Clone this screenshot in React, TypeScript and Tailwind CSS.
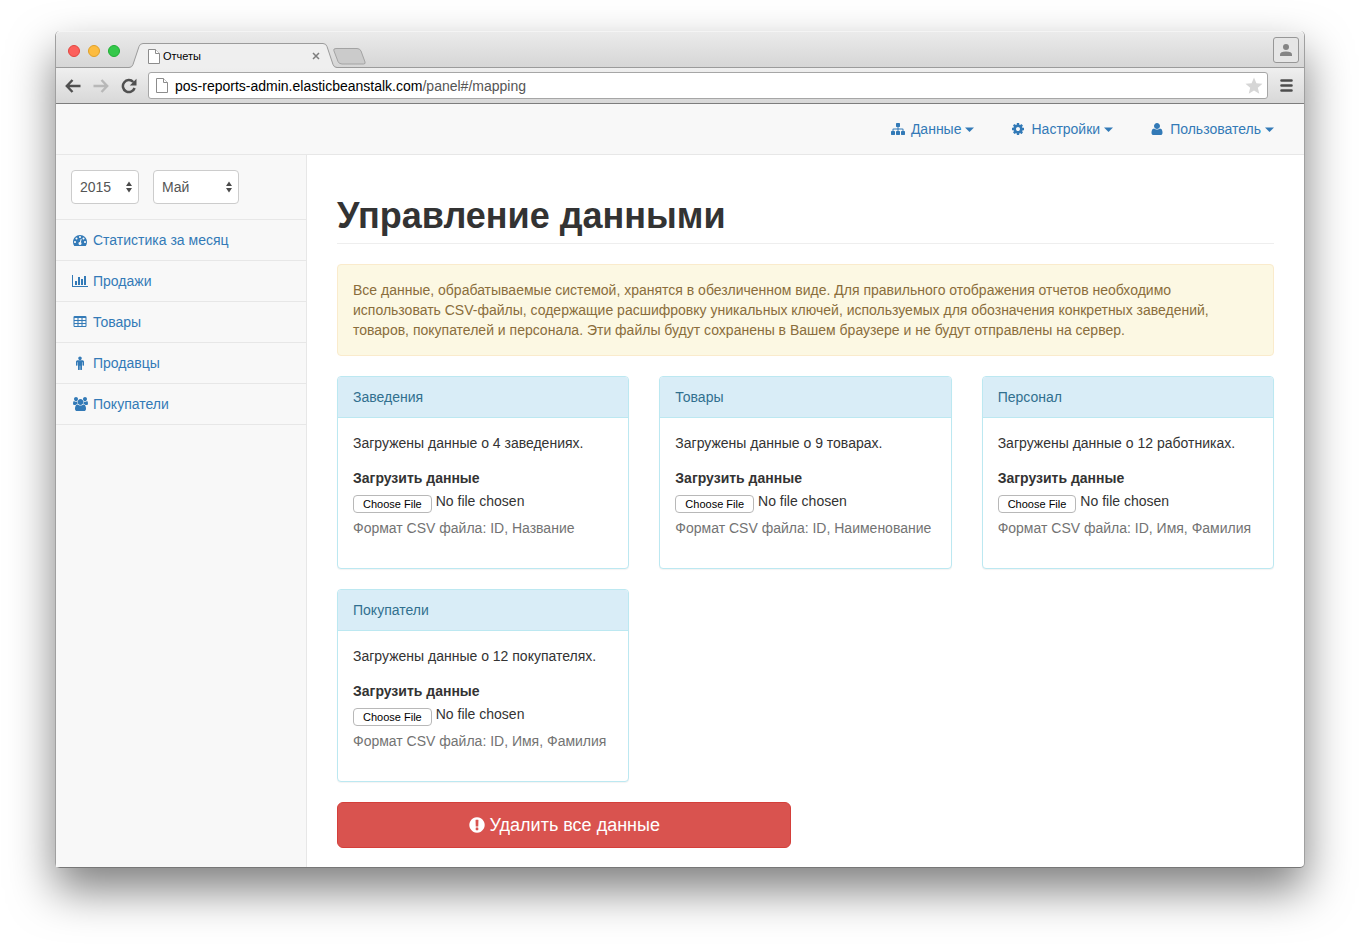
import React from "react";

type IconShape = { width: number; path: string };

const icons: Record<string, IconShape> = {
  sitemap: {
    width: 1792,
    path: "M1792 1248v320q0 40-28 68t-68 28h-320q-40 0-68-28t-28-68v-320q0-40 28-68t68-28h96v-192h-512v192h96q40 0 68 28t28 68v320q0 40-28 68t-68 28h-320q-40 0-68-28t-28-68v-320q0-40 28-68t68-28h96v-192h-512v192h96q40 0 68 28t28 68v320q0 40-28 68t-68 28h-320q-40 0-68-28t-28-68v-320q0-40 28-68t68-28h96v-192q0-52 38-90t90-38h512v-192h-96q-40 0-68-28t-28-68v-320q0-40 28-68t68-28h320q40 0 68 28t28 68v320q0 40-28 68t-68 28h-96v192h512q52 0 90 38t38 90v192h96q40 0 68 28t28 68z",
  },
  cog: {
    width: 1792,
    path: "M1152 896q0-106-75-181t-181-75-181 75-75 181 75 181 181 75 181-75 75-181zm512-109v222q0 12-8 23t-20 13l-185 28q-19 54-39 91 35 50 107 138 10 12 10 25t-9 23q-27 37-99 108t-94 71q-12 0-26-9l-138-108q-44 23-91 38-16 136-29 186-7 28-36 28h-222q-14 0-24.5-8.5t-11.5-21.5l-28-184q-49-16-90-37l-141 107q-10 9-25 9-14 0-25-11-126-114-165-168-7-10-7-23 0-12 8-23 15-21 51-66.5t54-70.5q-27-50-41-99l-183-27q-13-2-21-12.5t-8-23.5v-222q0-12 8-23t19-13l186-28q14-46 39-92-40-57-107-138-10-12-10-24 0-10 9-23 26-36 98.5-107.5t94.5-71.5q13 0 26 10l138 107q44-23 91-38 16-136 29-186 7-28 36-28h222q14 0 24.5 8.5t11.5 21.5l28 184q49 16 90 37l142-107q9-9 24-9 13 0 25 10 129 119 165 170 7 8 7 22 0 12-8 23-15 21-51 66.5t-54 70.5q26 50 41 98l183 28q13 2 21 12.5t8 23.5z",
  },
  user: {
    width: 1792,
    path: "M1600 1405q0 120-73 189.5t-194 69.5h-874q-121 0-194-69.5t-73-189.5q0-53 3.5-103.5t14-109 26.5-108.5 43-97.5 62-81 85.5-53.5 111.5-20q9 0 42 21.5t74.5 48 108 48 133.5 21.5 133.5-21.5 108-48 74.5-48 42-21.5q61 0 111.5 20t85.5 53.5 62 81 43 97.5 26.5 108.5 14 109 3.5 103.5zm-320-893q0 159-112.5 271.5t-271.5 112.5-271.5-112.5-112.5-271.5 112.5-271.5 271.5-112.5 271.5 112.5 112.5 271.5z",
  },
  dashboard: {
    width: 1792,
    path: "M384 1152q0-53-37.5-90.5t-90.5-37.5-90.5 37.5-37.5 90.5 37.5 90.5 90.5 37.5 90.5-37.5 37.5-90.5zm192-448q0-53-37.5-90.5t-90.5-37.5-90.5 37.5-37.5 90.5 37.5 90.5 90.5 37.5 90.5-37.5 37.5-90.5zm428 481l101-382q6-26-7.5-48.5t-38.5-29.5-48 6.5-30 39.5l-101 382q-60 5-107 43.5t-63 98.5q-20 77 20 146t117 89 146-20 89-117q16-60-6-117t-72-91zm660-33q0-53-37.5-90.5t-90.5-37.5-90.5 37.5-37.5 90.5 37.5 90.5 90.5 37.5 90.5-37.5 37.5-90.5zm-640-640q0-53-37.5-90.5t-90.5-37.5-90.5 37.5-37.5 90.5 37.5 90.5 90.5 37.5 90.5-37.5 37.5-90.5zm448 192q0-53-37.5-90.5t-90.5-37.5-90.5 37.5-37.5 90.5 37.5 90.5 90.5 37.5 90.5-37.5 37.5-90.5zm320 448q0 261-141 483-19 29-54 29h-1402q-35 0-54-29-141-221-141-483 0-182 71-348t191-286 286-191 348-71 348 71 286 191 191 286 71 348z",
  },
  chart: {
    width: 2048,
    path: "M640 896v512h-256v-512h256zm384-512v1024h-256v-1024h256zm1024 1152v128h-2048v-1536h128v1408h1920zm-640-896v768h-256v-768h256zm384-384v1152h-256v-1152h256z",
  },
  table: {
    width: 1792,
    path: "M224 128h1344q66 0 113 47t47 113v1088q0 66-47 113t-113 47h-1344q-66 0-113-47t-47-113v-1088q0-66 47-113t113-47zM192 416v192q0 32 32 32h320q32 0 32-32v-192q0-32-32-32h-320q-32 0-32 32zM704 416v192q0 32 32 32h320q32 0 32-32v-192q0-32-32-32h-320q-32 0-32 32zM1216 416v192q0 32 32 32h320q32 0 32-32v-192q0-32-32-32h-320q-32 0-32 32zM192 800v192q0 32 32 32h320q32 0 32-32v-192q0-32-32-32h-320q-32 0-32 32zM704 800v192q0 32 32 32h320q32 0 32-32v-192q0-32-32-32h-320q-32 0-32 32zM1216 800v192q0 32 32 32h320q32 0 32-32v-192q0-32-32-32h-320q-32 0-32 32zM192 1184v192q0 32 32 32h320q32 0 32-32v-192q0-32-32-32h-320q-32 0-32 32zM704 1184v192q0 32 32 32h320q32 0 32-32v-192q0-32-32-32h-320q-32 0-32 32zM1216 1184v192q0 32 32 32h320q32 0 32-32v-192q0-32-32-32h-320q-32 0-32 32z",
  },
  male: {
    width: 1792,
    path: "M1408 736v416q0 40-28 68t-68 28-68-28-28-68v-352h-64v912q0 46-33 79t-79 33-79-33-33-79v-464h-64v464q0 46-33 79t-79 33-79-33-33-79v-912h-64v352q0 40-28 68t-68 28-68-28-28-68v-416q0-80 56-136t136-56h640q80 0 136 56t56 136zm-288-448q0 93-65.5 158.5t-158.5 65.5-158.5-65.5-65.5-158.5 65.5-158.5 158.5-65.5 158.5 65.5 65.5 158.5z",
  },
  group: {
    width: 1920,
    path: "M593 896q-162 5-265 128h-134q-82 0-138-40.5t-56-118.5q0-353 124-353 6 0 43.5 21t97.5 42.5 119 21.5q67 0 133-23-5 37-5 66 0 139 81 256zm1071 637q0 120-73 189.5t-194 69.5h-874q-121 0-194-69.5t-73-189.5q0-53 3.5-103.5t14-109 26.5-108.5 43-97.5 62-81 85.5-53.5 111.5-20q10 0 43 21.5t73 48 107 48 135 21.5 135-21.5 107-48 73-48 43-21.5q61 0 111.5 20t85.5 53.5 62 81 43 97.5 26.5 108.5 14 109 3.5 103.5zm-1024-1277q0 106-75 181t-181 75-181-75-75-181 75-181 181-75 181 75 75 181zm704 384q0 159-112.5 271.5t-271.5 112.5-271.5-112.5-112.5-271.5 112.5-271.5 271.5-112.5 271.5 112.5 112.5 271.5zm576 225q0 78-56 118.5t-138 40.5h-134q-103-123-265-128 81-117 81-256 0-29-5-66 66 23 133 23 59 0 119-21.5t97.5-42.5 43.5-21q124 0 124 353zm-128-609q0 106-75 181t-181 75-181-75-75-181 75-181 181-75 181 75 75 181z",
  },
  warning: {
    width: 1792,
    path: "M896 128q209 0 385.5 103t279.5 279.5 103 385.5-103 385.5-279.5 279.5-385.5 103-385.5-103-279.5-279.5-103-385.5 103-385.5 279.5-279.5 385.5-103zm128 1247v-190q0-14-9-23.5t-22-9.5h-192q-13 0-23 10t-10 23v190q0 13 10 23t23 10h192q13 0 22-9.5t9-23.5zm-2-344l18-621q0-12-10-18-10-8-24-8h-220q-14 0-24 8-10 6-10 18l17 621q0 10 10 17.5t24 7.5h185q14 0 23.5-7.5t10.5-17.5z",
  },
};

function Icon({ name, className }: { name: string; className: string }) {
  const { width, path } = icons[name];
  return (
    <svg viewBox={`0 0 ${width} 1792`} className={className} fill="currentColor" fillRule="evenodd" aria-hidden="true">
      <path d={path} />
    </svg>
  );
}

function PageIcon() {
  return (
    <svg viewBox="0 0 12 15" className="h-[15px] w-3 shrink-0" fill="#fff" stroke="#8c8c8c" aria-hidden="true">
      <path d="M.5.5h7l4 4v10H.5z" />
      <path d="M7.500.5v4h4" />
    </svg>
  );
}

function BrowserTab() {
  return (
    <div className="-mb-px flex h-[25px] text-[#9b9b9b]">
      <svg viewBox="0 0 14 25" className="h-[25px] w-[14px]" aria-hidden="true">
        <path d="M0 25v-.5Q3 24.500 4 21.500L10 3.500Q11 .5 14 .5V25z" fill="#efefef" />
        <path d="M0 24.500Q3 24.500 4 21.500L10 3.500Q11 .5 14 .5" fill="none" stroke="currentColor" />
      </svg>
      <div className="flex w-[180px] items-center border-t border-[#9b9b9b] bg-[#efefef] pl-[5px] text-[11px] text-black">
        <PageIcon />
        <span className="ml-[3px]">Отчеты</span>
        <button type="button" aria-label="Закрыть вкладку" className="mr-[3px] ml-auto text-[#7d7d7d]">
          <svg viewBox="0 0 8 8" className="size-2" stroke="currentColor" strokeWidth="1.500" aria-hidden="true">
            <path d="M1 1l6 6M7 1L1 7" />
          </svg>
        </button>
      </div>
      <svg viewBox="0 0 14 25" className="h-[25px] w-[14px]" aria-hidden="true">
        <path d="M14 25v-.5Q11 24.500 10 21.500L4 3.500Q3 .5 0 .5V25z" fill="#efefef" />
        <path d="M14 24.500Q11 24.500 10 21.500L4 3.500Q3 .5 0 .5" fill="none" stroke="currentColor" />
      </svg>
    </div>
  );
}

function BrowserChrome() {
  return (
    <div>
      <div className="flex h-[37px] items-end rounded-t-[5px] border-t border-b border-t-[#f4f4f4] border-b-[#9b9b9b] bg-linear-to-b from-[#ebebeb] to-[#d6d6d6] pl-3">
        <div className="flex gap-2 self-center pt-[3px] pr-[9px]">
          <span className="size-3 rounded-full border border-[#e2463f] bg-[#fc605c]" />
          <span className="size-3 rounded-full border border-[#e0a028] bg-[#fdbc40]" />
          <span className="size-3 rounded-full border border-[#1fae34] bg-[#34c84a]" />
        </div>
        <BrowserTab />
        <button type="button" aria-label="Новая вкладка" className="-ml-1 pb-[2px]">
          <svg viewBox="0 0 33 17" className="h-[17px] w-[33px]" fill="#cbcbcb" stroke="#a3a3a3" aria-hidden="true">
            <path d="M3 .5h21q3 0 4 2.500l4 11q.7 2-1.500 2H9q-3 0-4-2.500L.8 2.500Q.2.500 3 .5z" />
          </svg>
        </button>
        <button
          type="button"
          aria-label="Профиль"
          className="mr-[5px] ml-auto flex size-[26px] items-center justify-center self-center rounded-[3px] border border-[#979797] bg-[#e6e6e6] text-[#858585]"
        >
          <svg viewBox="0 0 12 12" className="size-3" fill="currentColor" aria-hidden="true">
            <circle cx="6" cy="3" r="3" />
            <path d="M0 12v-1.500Q0 7.500 6 7.500t6 3V12z" />
          </svg>
        </button>
      </div>
      <div className="flex h-9 items-center border-b border-[#7d7d7d] bg-linear-to-b from-[#efefef] to-[#d8d8d8] pr-[11px] pl-[9px]">
        <div className="flex w-[83px] shrink-0 items-center gap-3 text-[#505050]">
          <button type="button" aria-label="Назад">
            <svg viewBox="0 0 16 16" className="size-4" fill="none" stroke="currentColor" strokeWidth="2.400" aria-hidden="true">
              <path d="M7.500 2L1.800 8l5.700 6M2 8h13.500" />
            </svg>
          </button>
          <button type="button" aria-label="Вперёд" className="text-[#b8b8b8]">
            <svg viewBox="0 0 16 16" className="size-4" fill="none" stroke="currentColor" strokeWidth="2.400" aria-hidden="true">
              <path d="M8.500 2l5.700 6-5.700 6M14 8H.5" />
            </svg>
          </button>
          <button type="button" aria-label="Обновить">
            <svg viewBox="0 0 16 16" className="size-4" fill="none" aria-hidden="true">
              <path d="M12.300 4A6 6 0 1 0 13.600 10" stroke="currentColor" strokeWidth="2.500" />
              <path d="M15.500.8V7.500H8.800z" fill="currentColor" />
            </svg>
          </button>
        </div>
        <div className="flex h-[27px] flex-1 items-center rounded-[3px] border border-[#a6a6a6] bg-white pr-1 pl-[7px]">
          <PageIcon />
          <p className="ml-[7px] text-sm whitespace-nowrap text-[#555]">
            <span className="text-black">pos-reports-admin.elasticbeanstalk.com</span>/panel#/mapping
          </p>
          <button type="button" aria-label="Добавить в закладки" className="ml-auto text-[#d6d6d6]">
            <svg viewBox="0 0 18 18" className="size-[18px]" fill="currentColor" aria-hidden="true">
              <path d="M9 .5l2.400 5.700 6.100.5-4.700 4 1.500 6L9 13.500l-5.300 3.200 1.500-6-4.700-4 6.100-.5z" />
            </svg>
          </button>
        </div>
        <button type="button" aria-label="Меню" className="ml-3 text-[#4d4d4d]">
          <svg viewBox="0 0 13 13" className="size-[13px]" stroke="currentColor" strokeWidth="2.600" strokeLinecap="round" aria-hidden="true">
            <path d="M1.500 1.500h10M1.500 6.500h10M1.500 11.500h10" />
          </svg>
        </button>
      </div>
    </div>
  );
}

const menu = [
  { icon: "sitemap", label: "Данные" },
  { icon: "cog", label: "Настройки" },
  { icon: "user", label: "Пользователь" },
];

function Navbar() {
  return (
    <nav className="flex h-[51px] items-center justify-end gap-[35px] border-b border-[#e7e7e7] bg-[#f8f8f8] pr-[30px] text-[#337ab7]">
      {menu.map((item) => (
        <a key={item.label} href="#" className="flex items-center">
          <span className="mr-1 flex w-[18px] justify-center">
            <Icon name={item.icon} className="size-[14px]" />
          </span>
          {item.label}
          <svg viewBox="0 0 9 5" className="ml-1 h-[5px] w-[9px]" fill="currentColor" aria-hidden="true">
            <path d="M0 .5h9L4.500 5z" />
          </svg>
        </a>
      ))}
    </nav>
  );
}

function SelectBox({ label, options, className }: { label: string; options: string[]; className: string }) {
  return (
    <div className={`relative ${className}`}>
      <select
        aria-label={label}
        className="h-[34px] w-full appearance-none rounded-[4px] border border-[#ccc] bg-white pl-2 text-[#555]"
      >
        {options.map((option) => (
          <option key={option}>{option}</option>
        ))}
      </select>
      <svg viewBox="0 0 7 13" className="pointer-events-none absolute top-[11px] right-[7px] h-3 w-[6px]" fill="#4c4c4c" aria-hidden="true">
        <path d="M3.500 0L7 5.200H0zM0 7.800h7L3.500 13z" />
      </svg>
    </div>
  );
}

const sections = [
  { icon: "dashboard", label: "Статистика за месяц", size: "size-[14px]" },
  { icon: "chart", label: "Продажи", size: "h-[14px] w-4" },
  { icon: "table", label: "Товары", size: "size-[14px]" },
  { icon: "male", label: "Продавцы", size: "size-[14px]" },
  { icon: "group", label: "Покупатели", size: "h-[14px] w-[15px]" },
];

function Sidebar() {
  return (
    <aside className="w-[251px] shrink-0 border-r border-[#e7e7e7] bg-[#f8f8f8]">
      <div className="flex gap-[14px] border-b border-[#e7e7e7] p-[15px]">
        <SelectBox label="Год" options={["2015"]} className="w-[68px]" />
        <SelectBox label="Месяц" options={["Май"]} className="w-[86px]" />
      </div>
      <ul>
        {sections.map((section) => (
          <li key={section.label} className="border-b border-[#e7e7e7]">
            <a href="#" className="flex h-10 items-center px-[15px] text-[#337ab7]">
              <span className="mr-1 flex w-[18px] justify-center">
                <Icon name={section.icon} className={section.size} />
              </span>
              {section.label}
            </a>
          </li>
        ))}
      </ul>
    </aside>
  );
}

const panels = [
  { id: "places", title: "Заведения", status: "Загружены данные о 4 заведениях.", format: "ID, Название" },
  { id: "goods", title: "Товары", status: "Загружены данные о 9 товарах.", format: "ID, Наименование" },
  { id: "staff", title: "Персонал", status: "Загружены данные о 12 работниках.", format: "ID, Имя, Фамилия" },
  { id: "buyers", title: "Покупатели", status: "Загружены данные о 12 покупателях.", format: "ID, Имя, Фамилия" },
];

function UploadPanel({ id, title, status, format }: (typeof panels)[number]) {
  return (
    <section className="rounded-[4px] border border-[#bce8f1] bg-white shadow-[0_1px_1px_rgba(0,0,0,0.05)]">
      <h2 className="rounded-t-[3px] border-b border-[#bce8f1] bg-[#d9edf7] px-[15px] py-[10px] text-[#31708f]">{title}</h2>
      <div className="px-[15px] pt-[15px] pb-[30px]">
        <p className="mb-[15px]">{status}</p>
        <label htmlFor={id} className="block font-bold">
          Загрузить данные
        </label>
        <input
          id={id}
          type="file"
          className="mt-[3px] block h-[22px] w-full text-sm leading-5 file:mt-1 file:mr-1 file:h-[18px] file:rounded-[4px] file:border file:border-solid file:border-[#b8b8b8] file:bg-white file:px-[9px] file:align-middle file:text-[11px] file:leading-4 file:text-black"
        />
        <p className="mt-[5px] whitespace-nowrap text-[#737373]">Формат CSV файла: {format}</p>
      </div>
    </section>
  );
}

export default function App() {
  return (
    <div className="min-h-screen bg-white px-[55px] pt-[31px] pb-20 font-['Liberation_Sans',Arial,sans-serif] text-sm leading-5 text-[#333]">
      <div className="rounded-[5px] border-x border-b border-[#a0a0a0] border-b-[#777] bg-white shadow-[0_22px_45px_rgba(0,0,0,0.5)]">
        <BrowserChrome />
        <Navbar />
        <div className="flex">
          <Sidebar />
          <main className="min-w-0 flex-1 px-[30px] pt-[41px] pb-[19px]">
            <h1 className="mb-5 border-b border-[#eee] pb-[7px] text-[36px] leading-10 font-bold">Управление данными</h1>
            <p className="mb-5 rounded-[4px] border border-[#faebcc] bg-[#fcf8e3] p-[15px] text-[#8a6d3b]">
              Все данные, обрабатываемые системой, хранятся в обезличенном виде. Для правильного отображения отчетов необходимо
              использовать CSV-файлы, содержащие расшифровку уникальных ключей, используемых для обозначения конкретных заведений,
              товаров, покупателей и персонала. Эти файлы будут сохранены в Вашем браузере и не будут отправлены на сервер.
            </p>
            <div className="mb-5 grid grid-cols-3 gap-x-[30px] gap-y-5">
              {panels.map((panel) => (
                <UploadPanel key={panel.id} {...panel} />
              ))}
            </div>
            <div className="grid grid-cols-2 gap-[30px]">
              <button
                type="button"
                className="flex h-[46px] items-center justify-center gap-1 rounded-[6px] border border-[#d43f3a] bg-[#d9534f] text-lg text-white"
              >
                <Icon name="warning" className="size-[18px]" />
                Удалить все данные
              </button>
            </div>
          </main>
        </div>
      </div>
    </div>
  );
}
